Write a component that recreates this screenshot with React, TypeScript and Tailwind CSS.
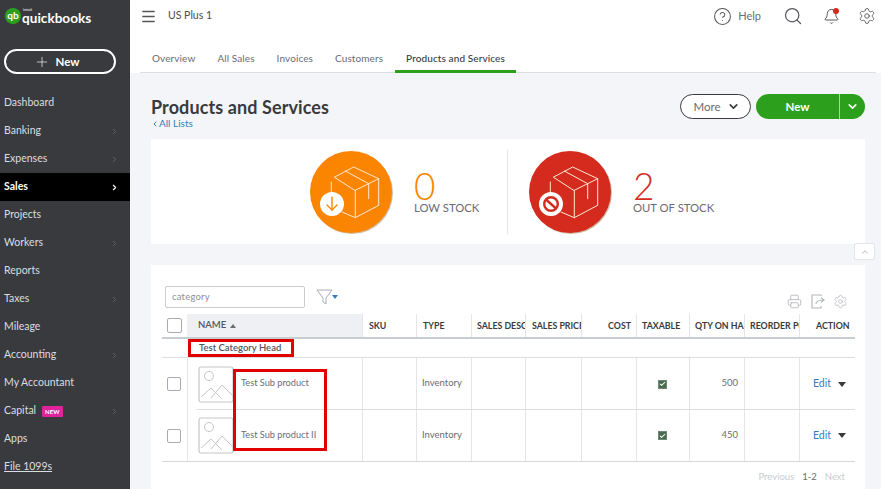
import React from "react";
import { ChevronDown, ChevronRight, ChevronUp, CircleHelp, Menu, Plus, Printer, Search, Bell, Settings, Check } from "lucide-react";

const nav: { label: string; arrow?: boolean; active?: boolean; badge?: boolean; underline?: boolean }[] = [
  { label: "Dashboard" },
  { label: "Banking", arrow: true },
  { label: "Expenses", arrow: true },
  { label: "Sales", arrow: true, active: true },
  { label: "Projects" },
  { label: "Workers", arrow: true },
  { label: "Reports" },
  { label: "Taxes", arrow: true },
  { label: "Mileage" },
  { label: "Accounting", arrow: true },
  { label: "My Accountant" },
  { label: "Capital", arrow: true, badge: true },
  { label: "Apps" },
  { label: "File 1099s", underline: true },
];

const cols = "grid grid-cols-[25px_175px_54px_55px_54px_56px_55px_53px_55px_55px_56px]";

function BoxIcon({ kind }: { kind: "low" | "out" }) {
  const bg = kind === "low" ? "#fb8500" : "#d52b1e";
  return (
    <svg width="84" height="84" viewBox="0 0 84 84" className="shrink-0">
      <circle cx="42" cy="43" r="41" fill="#a8895f" opacity="0.55" />
      <circle cx="41" cy="42" r="41" fill={bg} />
      <g fill="none" stroke="#ffe9d2" strokeWidth="1" strokeLinejoin="round" strokeLinecap="round">
        <path d="M24.7 27 L43.7 17 L68.7 28.7 L45.3 40.3 Z" />
        <path d="M45.3 40.3 L45.3 67.7 L68.7 55.3 L68.7 28.7" />
        <path d="M21.3 32 L21.3 45" />
        <path d="M35.3 21 L58.7 33.7 L58.7 48.7" />
        <path d="M32 62 L45.3 67.7" />
      </g>
      <circle cx="22" cy="54" r="12" fill="#fff" />
      {kind === "low" ? (
        <g fill="none" stroke={bg} strokeWidth="1.4" strokeLinecap="round" strokeLinejoin="round">
          <path d="M22 47 L22 60" />
          <path d="M17 55 L22 60 L27 55" />
        </g>
      ) : (
        <g fill="none" stroke={bg} strokeWidth="2.4">
          <circle cx="22" cy="54" r="6.8" />
          <path d="M17 49.5 L27 58.5" />
        </g>
      )}
    </svg>
  );
}

function Placeholder() {
  return (
    <svg width="36" height="37" viewBox="0 0 36 37" className="shrink-0">
      <rect x="1" y="1" width="34" height="35" rx="2" fill="#fff" stroke="#c4c6ca" strokeWidth="1.2" />
      <circle cx="11" cy="10" r="4.5" fill="none" stroke="#c4c6ca" strokeWidth="1" />
      <path d="M3 31 L13 22 L24 33 M13 32 L24 19 L35 30" fill="none" stroke="#c4c6ca" strokeWidth="1" />
    </svg>
  );
}

function Row({ name, qty, last }: { name: string; qty: string; last?: boolean }) {
  const cell = "border-l border-[#e3e5e8]";
  return (
    <div className={`${cols} relative h-[52px] ${last ? "border-b border-[#d4d7dc]" : ""}`}>
      <div className="flex items-center">
        <span className="w-[14px] h-[14px] ml-[5px] border border-[#a8acb2] rounded-[2px] bg-white" />
      </div>
      <div className={`${cell} flex items-center pl-[10px] gap-[7px]`}>
        <Placeholder />
        <span className="text-[9.2px] text-[#6b6c72] pb-[2px]">{name}</span>
      </div>
      <div className={cell} />
      <div className={`${cell} flex items-center pl-[5px] pb-[1px] text-[9.5px] text-[#6b6c72]`}>Inventory</div>
      <div className={cell} />
      <div className={cell} />
      <div className={cell} />
      <div className={`${cell} flex items-center justify-center pr-[2px]`}>
        <span className="w-[9px] h-[9px] bg-[#4a6b4f] border border-[#6d8a71] flex items-center justify-center">
          <Check size={8} strokeWidth={3.5} className="text-white" />
        </span>
      </div>
      <div className={`${cell} flex items-center justify-end pr-[6px] pb-[1px] text-[9.5px] text-[#6b6c72]`}>{qty}</div>
      <div className={cell} />
      <div className={`${cell} flex items-center pl-[13px] gap-[7px]`}>
        <span className="text-[10.5px] text-[#2f7fc1]">Edit</span>
        <span className="w-0 h-0 border-l-[4px] border-r-[4px] border-t-[5px] border-l-transparent border-r-transparent border-t-[#393a3d]" />
      </div>
      {!last && <div className="absolute left-[35px] right-0 bottom-0 h-px bg-[#dcdee1]" />}
    </div>
  );
}

const headers: [string, string][] = [
  ["SKU", "pl-[6px]"],
  ["TYPE", "pl-[6px]"],
  ["SALES DESC", "pl-[5px]"],
  ["SALES PRICE", "pl-[6px]"],
  ["COST", "justify-end pr-[5px]"],
  ["TAXABLE", "pl-[5px]"],
  ["QTY ON HAND", "pl-[5px]"],
  ["REORDER POINT", "pl-[5px]"],
  ["ACTION", "pl-[16px]"],
];

export default function App() {
  return (
    <div className="w-[881px] h-[489px] overflow-hidden flex bg-[#f4f5f8] font-['Lato','Liberation_Sans',sans-serif] relative">
      <aside className="w-[130px] shrink-0 bg-[#393a3d] flex flex-col text-[#dcdde0]">
        <div className="h-[49px] shrink-0 flex items-start pt-[8px] pl-[5px] relative">
          <span className="w-[16px] h-[16px] rounded-full bg-[#2ca01c] text-white text-[10px] font-bold leading-[15px] text-center">qb</span>
          <div className="ml-[1px] flex flex-col leading-none">
            <span className="text-[4px] text-white leading-[4px] pl-[1px]">intuit</span>
            <span className="text-[13.6px] font-bold text-white leading-[13px]">quickbooks</span>
          </div>
        </div>
        <div className="mx-[4px] w-[112px] h-[25px] shrink-0 border-2 border-white rounded-full flex items-center justify-center gap-[6px] pr-[7px] text-white">
          <Plus size={16} strokeWidth={1} />
          <span className="text-[11.5px] font-bold">New</span>
        </div>
        <nav className="mt-[15px] flex flex-col">
          {nav.map((n) => (
            <div
              key={n.label}
              className={`h-[28px] shrink-0 pl-[4px] pr-[11px] flex items-center justify-between text-[10.5px] ${
                n.active ? "bg-black text-white font-bold" : ""
              }`}
            >
              <span className={`flex items-center gap-[6px] ${n.underline ? "underline" : ""}`}>
                {n.label}
                {n.badge && (
                  <span className="bg-[#e0239d] text-white text-[6px] font-bold px-[3px] h-[11px] leading-[11px] rounded-[1px]">NEW</span>
                )}
              </span>
              {n.arrow && (
                <ChevronRight size={9} strokeWidth={n.active ? 3 : 2} className={n.active ? "text-white" : "text-[#6f7175]"} />
              )}
            </div>
          ))}
        </nav>
      </aside>

      <main className="flex-1 min-w-0 flex flex-col">
        <header className="h-[32px] shrink-0 bg-white flex items-center pl-[10px] pr-[5px] text-[#6b6c72]">
          <Menu size={17} strokeWidth={2} className="text-[#55565b]" />
          <span className="ml-[11px] text-[10.5px] text-[#4a4b50]">US Plus 1</span>
          <div className="ml-auto flex items-center">
            <CircleHelp size={19} strokeWidth={1.3} className="text-[#55565b]" />
            <span className="ml-[6px] text-[11px] text-[#6b6c72]">Help</span>
            <Search size={20} strokeWidth={1.5} className="ml-[22px] text-[#55565b]" />
            <span className="relative ml-[20px] flex">
              <Bell size={17} strokeWidth={1.4} className="text-[#55565b]" />
              <span className="absolute right-[1px] top-[0px] w-[6px] h-[6px] bg-[#d52b1e] rounded-full" />
            </span>
            <Settings size={18} strokeWidth={1.2} className="ml-[18px] text-[#55565b]" />
          </div>
        </header>
        <div className="h-[41px] shrink-0 bg-white pl-[10px] pr-[5px]">
          <div className="h-full border-b border-[#dcdee1] flex items-end gap-[22px] pl-[12px] text-[10px] tracking-[0.1px] text-[#6b6c72]">
            <span className="h-[21px]">Overview</span>
            <span className="h-[21px]">All Sales</span>
            <span className="h-[21px]">Invoices</span>
            <span className="h-[21px]">Customers</span>
            <span className="h-[22px] -mb-px -ml-[10px] px-[11px] border-b-[3px] border-[#2ca01c] text-[#393a3d] font-medium">Products and Services</span>
          </div>
        </div>

        <div className="flex-1 min-h-0 pl-[21px] pr-[16px] flex flex-col relative">
          <div className="h-[66px] shrink-0 flex items-start justify-between">
            <div className="pt-[22px]">
              <h1 className="text-[18px] font-bold text-[#393a3d] leading-[24px] tracking-[0.1px]">Products and Services</h1>
              <div className="flex items-center text-[10px] text-[#2f7fc1] leading-[13px] -mt-[2px]">
                <ChevronRight size={8} strokeWidth={3} className="rotate-180 text-[#2f7fc1]" />
                All Lists
              </div>
            </div>
            <div className="pt-[21px] flex items-center gap-[5px]">
              <div className="w-[71px] h-[25px] border border-[#393a3d] rounded-full bg-white flex items-center justify-center gap-[6px] pl-[2px] text-[11.5px] text-[#6b6c72]">
                More
                <ChevronDown size={13} strokeWidth={3} className="text-[#393a3d]" />
              </div>
              <div className="w-[109px] h-[25px] bg-[#2ca01c] rounded-full flex text-white">
                <div className="w-[84px] flex items-center justify-center text-[11.5px] font-bold border-r border-[#a6d9a0]">New</div>
                <div className="flex-1 flex items-center justify-center">
                  <ChevronDown size={13} strokeWidth={3} />
                </div>
              </div>
            </div>
          </div>

          <section className="h-[105px] shrink-0 bg-white flex items-center pl-[159px]">
            <BoxIcon kind="low" />
            <div className="ml-[20px] w-[93px] flex flex-col">
              <span className="text-[37px] leading-[34px] font-light text-[#fb8500] h-[34px]">0</span>
              <span className="text-[11.3px] text-[#6b6c72] leading-[14px] -mt-[2px]">LOW STOCK</span>
            </div>
            <div className="w-px h-[84px] bg-[#e3e5e8]" />
            <div className="ml-[21px] flex items-center">
              <BoxIcon kind="out" />
              <div className="ml-[20px] flex flex-col">
                <span className="text-[37px] leading-[34px] font-light text-[#d52b1e] h-[34px]">2</span>
                <span className="text-[11.3px] text-[#6b6c72] leading-[14px] -mt-[2px]">OUT OF STOCK</span>
              </div>
            </div>
          </section>

          <section className="mt-[21px] flex-1 min-h-0 bg-white pl-[11px] pr-[10px]">
            <div className="h-[49px] flex items-start pt-[21px]">
              <div className="ml-[3px] w-[140px] h-[22px] border border-[#c9ccd0] rounded-[2px] pl-[6px] flex items-center text-[9.5px] text-[#8d9096] tracking-[0.2px]">
                category
              </div>
              <svg width="24" height="17" viewBox="0 0 24 17" className="ml-[11px] mt-[3px]">
                <path d="M1 1 H16 L10 9 V15 L7 13 V9 Z" fill="none" stroke="#a8acb2" strokeWidth="1" />
                <path d="M16 6 H22 L19 10 Z" fill="#2f7fc1" />
              </svg>
              <div className="ml-auto mr-[7px] mt-[8px] flex items-center gap-[8px] text-[#b5b8bd]">
                <Printer size={15} strokeWidth={1.4} />
                <svg width="15" height="15" viewBox="0 0 15 15" fill="none" stroke="currentColor" strokeWidth="1.2">
                  <path d="M11 2 V1 H2 V14 H11 V12" />
                  <path d="M6 10 C6 7 8 6 14 6 M11 3.5 L14 6 L11 8.5" />
                </svg>
                <Settings size={15} strokeWidth={1.2} />
              </div>
            </div>
            <div className={`${cols} h-[25px] border-b-2 border-[#c9ccd0] text-[8.8px] font-bold text-[#393a3d]`}>
              <div className="flex items-center">
                <span className="w-[15px] h-[15px] ml-[5px] border border-[#a8acb2] rounded-[2px] bg-white" />
              </div>
              <div className="bg-[#eef0f3] flex items-center pl-[11px] gap-[4px] font-semibold text-[#55565b] text-[9.5px]">
                NAME
                <span className="w-0 h-0 border-l-[3px] border-r-[3px] border-b-[4px] border-l-transparent border-r-transparent border-b-[#6b6c72]" />
              </div>
              {headers.map(([h, c]) => (
                <div key={h} className={`border-l border-[#e3e5e8] flex items-center overflow-hidden whitespace-nowrap ${c}`}>
                  {h}
                </div>
              ))}
            </div>
            <div className="h-[19px] border-b border-[#dcdee1] pl-[37px] flex items-center text-[9.5px] font-semibold text-[#55565b]">
              Test Category Head
            </div>
            <Row name="Test Sub product" qty="500" />
            <Row name="Test Sub product II" qty="450" last />
            <div className="pt-[8px] flex items-center justify-end gap-[8px] pr-[10px] text-[9.5px] text-[#c9ccd0]">
              <span>Previous</span>
              <span className="text-[#6b6c72]">1-2</span>
              <span>Next</span>
            </div>
          </section>

          <div className="absolute right-[6px] top-[170px] w-[21px] h-[17px] bg-white border border-[#e3e5e8] rounded-[2px] flex items-center justify-center text-[#a8acb2]">
            <ChevronUp size={10} strokeWidth={2} />
          </div>
        </div>
      </main>

      <div className="absolute left-[188px] top-[339px] w-[106px] h-[18px] border-[3px] border-[#e00000]" />
      <div className="absolute left-[233px] top-[369px] w-[94px] h-[82px] border-[3px] border-[#e00000]" />
    </div>
  );
}
